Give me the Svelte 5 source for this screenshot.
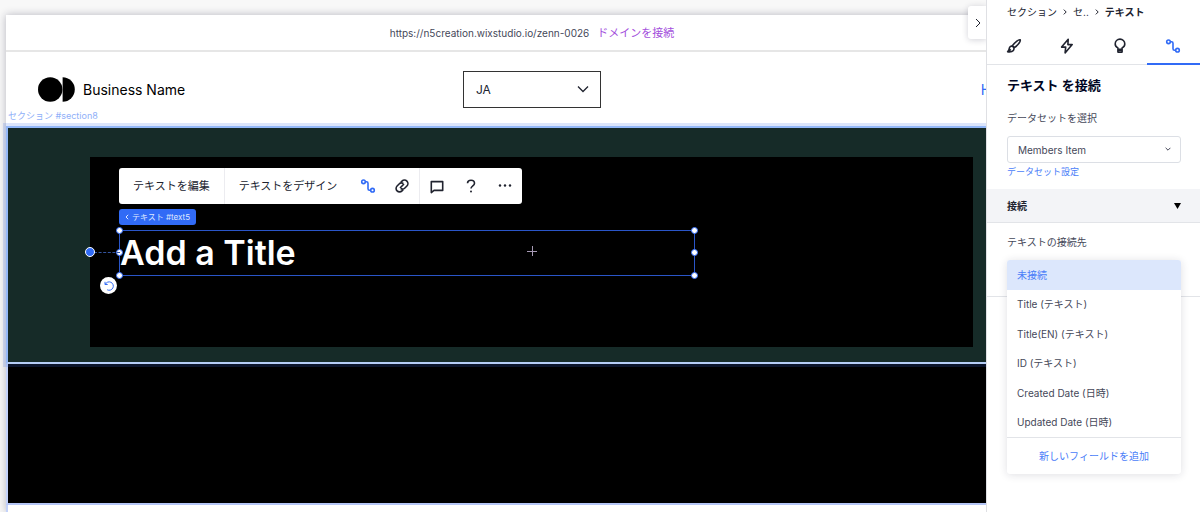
<script lang="ts">
  interface Tab {
    id: string;
    label: string;
  }

  const TABS: Tab[] = [
    { id: 'design', label: 'デザイン' },
    { id: 'actions', label: 'アクション' },
    { id: 'tips', label: 'ヒント' },
    { id: 'connect', label: '接続' },
  ];

  const FIELDS = [
    '未接続',
    'Title (テキスト)',
    'Title(EN) (テキスト)',
    'ID (テキスト)',
    'Created Date (日時)',
    'Updated Date (日時)',
  ];

  const HANDLES = ['nw', 'w', 'sw', 'ne', 'e', 'se'];

  let activeTab = $state('connect');
  let field = $state('未接続');
  let lang = $state('JA');
  let dataset = $state('Members Item');
</script>

{#snippet icon(name: string)}
  <svg class="icon" viewBox="0 0 16 16" width="16" height="16" aria-hidden="true">
    {#if name === 'design'}
      <path d="M14.2 1.8c-1.5-.6-5.6 2.6-7.8 6l1.9 1.9c3.4-2.2 6.6-6.3 5.9-7.9z" />
      <path d="M6.4 8.2c-1.7-.3-2.9.6-3.1 2.2-.1 1.4-.6 2.3-1.7 3.4 2.9.5 6.2-.2 6.4-2.9.1-1.3-.6-2.3-1.6-2.7zM2.2 13.6l2.6-2.3" />
    {:else if name === 'actions'}
      <path d="M9.2 1.2L2.6 9.1h4.1l-.6 5.8 7.1-8.3H8.9z" />
    {:else if name === 'tips'}
      <path d="M5.9 11.2V9.9C4.2 9 3.2 7.8 3.2 5.9a4.8 4.8 0 0 1 9.6 0c0 1.900-1 3.100-2.700 4v1.300zM5.900 11.200v2.900h4.200v-2.900M6 12.200h4" />
    {:else if name === 'connect'}
      <circle cx="3.5" cy="3.8" r="1.8" />
      <circle cx="12.5" cy="12.2" r="1.8" />
      <path d="M5.3 3.8h1.200Q8 3.800 8 5.300v5.400q0 1.500 1.500 1.500h1.200" />
    {:else if name === 'link'}
      <path d="M6.800 4.300l1.200-1.200a3.400 3.400 0 0 1 4.900 4.900l-2 2a3.400 3.400 0 0 1-4.200.5" />
      <path d="M9.200 11.700L8 12.900A3.400 3.400 0 0 1 3.100 8l2-2a3.400 3.400 0 0 1 4.200-.5M6 10l4-4" />
    {:else if name === 'comment'}
      <path d="M2.300 3.600h11.400v8.800H5L2.300 14.600z" />
    {:else if name === 'help'}
      <path d="M4.500 5.200C4.600 3.200 6 2.200 8 2.200s3.500 1.200 3.500 3c0 2.600-3.500 2.600-3.500 5.400" />
      <circle class="solid" cx="8" cy="13.600" r="1" />
    {:else if name === 'more'}
      <circle class="solid" cx="3" cy="7.500" r="1.200" />
      <circle class="solid" cx="8" cy="7.500" r="1.200" />
      <circle class="solid" cx="13" cy="7.500" r="1.200" />
    {/if}
  </svg>
{/snippet}

<div class="editor">
  <main class="stage">
    <div class="page">
      <div class="url-bar">
        <span>https://n5creation.wixstudio.io/zenn-0026</span>
        <a href="#domain">ドメインを接続</a>
      </div>

      <header class="site-header">
        <div class="brand">
          <svg viewBox="0 0 37 25" width="37" height="25" aria-hidden="true">
            <circle cx="12.2" cy="12.5" r="12.2" />
            <path d="M24.600.3a12.200 12.200 0 0 1 0 24.400z" />
          </svg>
          <span>Business Name</span>
        </div>
        <div class="lang">
          <select aria-label="Language" bind:value={lang}>
            <option>JA</option>
            <option>EN</option>
          </select>
          <svg viewBox="0 0 12 12" width="12" height="12" aria-hidden="true"><path d="M1 3.500l5 5 5-5" /></svg>
        </div>
        <nav><a href="#home">Home</a></nav>
      </header>

      <section class="selected-section">
        <span class="section-tag">セクション #section8</span>
        <div class="container">
          <div class="toolbar" role="toolbar" aria-label="テキスト">
            <button>テキストを編集</button>
            <div class="group">
              <button>テキストをデザイン</button>
              <button class="tool on" aria-label="データに接続">{@render icon('connect')}</button>
              <button class="tool" aria-label="リンク">{@render icon('link')}</button>
            </div>
            <div class="group">
              <button class="tool" aria-label="コメント">{@render icon('comment')}</button>
              <button class="tool" aria-label="ヘルプ">{@render icon('help')}</button>
              <button class="tool" aria-label="その他">{@render icon('more')}</button>
            </div>
          </div>
          <button class="element-tag">
            <svg viewBox="0 0 4 6" width="4" height="6" aria-hidden="true"><path d="M3.200.8L1 3l2.200 2.200" /></svg>
            テキスト #text5
          </button>
          <div class="text-box">
            <h1>Add a Title</h1>
            {#each HANDLES as h}<i class="handle {h}"></i>{/each}
            <i class="anchor-line"></i>
            <i class="anchor-dot"></i>
            <button class="rotate" aria-label="リセット">
              <svg viewBox="0 0 12 12" width="12" height="12" aria-hidden="true">
                <path d="M2 1.800v2.700h2.700M2.300 4.300A4.200 4.200 0 1 1 4.200 9.800" />
              </svg>
            </button>
          </div>
          <svg class="center-mark" viewBox="0 0 10 10" width="10" height="10" aria-hidden="true">
            <path d="M0 5.500h10M5.500 0v10" />
          </svg>
        </div>
      </section>

      <section class="dark-section"></section>
      <div class="page-rest"></div>
    </div>
    <button class="collapse" aria-label="パネルを閉じる">
      <svg viewBox="0 0 6 10" width="6" height="10" aria-hidden="true"><path d="M1 1l4 4-4 4" /></svg>
    </button>
  </main>

  <aside class="panel">
    <nav class="crumbs" aria-label="パンくず">
      <a href="#section">セクション</a>
      <svg viewBox="0 0 4 6" width="4" height="6" aria-hidden="true"><path d="M.8.600L3.200 3 .8 5.400" /></svg>
      <a href="#parent">セ..</a>
      <svg viewBox="0 0 4 6" width="4" height="6" aria-hidden="true"><path d="M.8.600L3.200 3 .8 5.400" /></svg>
      <b>テキスト</b>
    </nav>

    <div class="tabs" role="tablist">
      {#each TABS as t (t.id)}
        <button
          role="tab"
          aria-label={t.label}
          aria-selected={activeTab === t.id}
          class:active={activeTab === t.id}
          onclick={() => (activeTab = t.id)}
        >{@render icon(t.id)}</button>
      {/each}
    </div>

    <div class="dataset">
      <h2>テキスト を接続</h2>
      <label for="dataset">データセットを選択</label>
      <div class="picker">
        <select id="dataset" bind:value={dataset}>
          <option>Members Item</option>
        </select>
        <svg viewBox="0 0 6 6" width="6" height="6" aria-hidden="true"><path d="M.6 1.800L3 4.200l2.400-2.400" /></svg>
      </div>
      <a href="#settings">データセット設定</a>
    </div>

    <button class="accordion" aria-expanded="true">
      接続
      <svg viewBox="0 0 7 6" width="7" height="6" aria-hidden="true"><path d="M0 0h7L3.500 6z" /></svg>
    </button>

    <div class="binding">
      <span class="label" id="field-label">テキストの接続先</span>
      <div class="menu-anchor">
        <div class="menu">
          <div class="options" role="listbox" aria-labelledby="field-label">
            {#each FIELDS as f}
              <button
                role="option"
                aria-selected={field === f}
                class:selected={field === f}
                onclick={() => (field = f)}
              >{f}</button>
            {/each}
          </div>
          <button class="add">新しいフィールドを追加</button>
        </div>
      </div>
    </div>
  </aside>
</div>

<style>
  :global(body) {
    background: #fff;
  }
  .editor {
    --blue: #316bf6;
    --link: #4a7df8;
    --ink: #20232f;
    --ink-soft: #454859;
    --rule: #e2e4e8;
    display: grid;
    grid-template-columns: minmax(0, 1fr) 213px;
    min-height: 100vh;
    font-family: Inter, "Noto Sans CJK JP", sans-serif;
    font-size: 10px;
    line-height: 16px;
    color: var(--ink);
  }
  button, select {
    font: inherit;
    color: inherit;
    border: 0;
    margin: 0;
    padding: 0;
    background: none;
    cursor: pointer;
  }
  select { appearance: none; }
  a { text-decoration: none; color: inherit; }
  svg { display: block; fill: none; stroke: currentColor; }
  .icon { stroke-width: 1.6; stroke-linejoin: round; }
  .icon .solid { fill: currentColor; stroke: none; }

  .stage {
    position: relative;
    display: flex;
    overflow: hidden;
    padding: 15px 0 0 6px;
    background: #f8f8f8;
  }
  /* the page runs on under the side panel */
  .page {
    flex: none;
    display: flex;
    flex-direction: column;
    width: calc(100% + 71px);
    background: #fff;
    box-shadow: 0 0 8px rgba(30, 30, 60, 0.3);
  }
  .url-bar {
    display: flex;
    justify-content: center;
    align-items: center;
    gap: 8px;
    height: 35px;
    border-bottom: 2px solid #e6e6e6;
    color: var(--ink-soft);
  }
  .url-bar a { font-size: 11px; color: #a34fdc; }

  .site-header {
    display: grid;
    grid-template-columns: 1fr auto 1fr;
    align-items: center;
    box-sizing: border-box;
    height: 74px;
    padding-top: 1px;
    font-size: 14px;
  }
  .brand {
    display: flex;
    align-items: center;
    gap: 8px;
    padding-left: 32px;
    color: #000;
  }
  .brand svg { fill: #000; stroke: none; }
  .lang { position: relative; }
  .lang select {
    display: block;
    width: 138px;
    height: 37px;
    padding: 0 12px;
    border: 1px solid #333;
    border-radius: 0;
    font-size: 12px;
  }
  .lang svg {
    position: absolute;
    right: 12px;
    top: 12px;
    pointer-events: none;
    stroke-width: 1.3;
  }
  .site-header nav {
    justify-self: end;
    padding-right: 38px;
    color: var(--blue);
  }

  .selected-section {
    position: relative;
    z-index: 1;
    padding: 29px 83px 15px 82px;
    border: 2px solid #94b8f8;
    border-bottom-color: #b5cdf6;
    background: #162b28;
    box-shadow: 0 0 0 3px rgba(60, 110, 235, 0.18);
  }
  .section-tag {
    position: absolute;
    left: 0;
    bottom: 100%;
    margin-bottom: 4px;
    font-size: 9px;
    color: #8fb0f9;
  }
  .container {
    position: relative;
    min-height: 168px;
    padding: 11px 29px;
    background: #000;
  }
  .toolbar {
    display: flex;
    width: max-content;
    height: 36px;
    border-radius: 3px;
    background: #fff;
    font-size: 11px;
  }
  .toolbar button { padding: 0 14px; }
  .toolbar .tool {
    display: grid;
    place-items: center;
    width: 34px;
    padding: 0;
  }
  .toolbar .on { color: var(--blue); }
  .group {
    display: flex;
    border-left: 1px solid #ececf0;
  }
  .element-tag {
    display: flex;
    align-items: center;
    gap: 3px;
    margin-top: 5px;
    padding: 0 6px;
    border-radius: 3px;
    background: var(--blue);
    color: #dfe8ff;
    font-size: 8px;
  }
  .text-box {
    position: relative;
    box-sizing: border-box;
    width: calc(70% - 2px);
    margin-top: 5px;
    border: 1px solid #2a55c8;
  }
  h1 {
    margin: 0;
    font-size: 34px;
    line-height: 44px;
    font-weight: 600;
    color: #fff;
  }
  .handle {
    position: absolute;
    box-sizing: border-box;
    width: 7px;
    height: 7px;
    border: 1px solid var(--blue);
    border-radius: 50%;
    background: #fff;
  }
  .nw, .w, .sw { left: -4px; }
  .ne, .e, .se { right: -4px; }
  .nw, .ne { top: -4px; }
  .sw, .se { bottom: -4px; }
  .w, .e { top: calc(50% - 4px); }
  .anchor-line {
    position: absolute;
    top: calc(50% - 1px);
    right: 100%;
    width: 26px;
    border-top: 1px dashed #34549f;
  }
  .anchor-dot {
    position: absolute;
    box-sizing: border-box;
    top: calc(50% - 6px);
    left: -35px;
    width: 10px;
    height: 10px;
    border: 1px solid #fff;
    border-radius: 50%;
    background: var(--blue);
  }
  .rotate {
    position: absolute;
    display: grid;
    place-items: center;
    left: -20px;
    top: 46px;
    width: 17px;
    height: 17px;
    border-radius: 50%;
    background: #fff;
    color: var(--blue);
  }
  .center-mark {
    position: absolute;
    left: calc(50% - 5px);
    top: calc(50% - 6px);
    stroke: #a79ab5;
  }

  .dark-section {
    min-height: 139px;
    border-left: 2px solid #c3d2fa;
    border-bottom: 2px solid #b5c6f6;
    background: #000;
  }
  .page-rest {
    flex: 1;
    border-left: 2px solid #c3d2fa;
  }
  .collapse {
    position: absolute;
    z-index: 2;
    display: grid;
    place-items: center;
    top: 6px;
    right: 0;
    width: 19px;
    height: 33px;
    border-radius: 3px 0 0 3px;
    background: #fff;
    box-shadow: 0 1px 6px rgba(30, 30, 60, 0.2);
  }

  .panel {
    position: relative;
    z-index: 3;
    background: #fff;
    box-shadow: 0 0 0 1px #dfe0e4;
  }
  .crumbs {
    display: flex;
    align-items: center;
    gap: 6px;
    height: 24px;
    padding-left: 20px;
  }
  .tabs {
    display: grid;
    grid-template-columns: repeat(4, 1fr);
    height: 40px;
    border-bottom: 1px solid var(--rule);
  }
  .tabs button {
    display: grid;
    place-items: center;
    padding-top: 4px;
    margin-bottom: -1px;
    border-bottom: 2px solid transparent;
  }
  .tabs .active {
    color: var(--blue);
    border-bottom-color: var(--blue);
  }
  .dataset {
    display: flex;
    flex-direction: column;
    padding: 10px 19px 9px 20px;
  }
  h2 {
    margin: 0 0 15px;
    font-size: 13px;
    line-height: 20px;
    font-weight: 700;
    color: #000624;
  }
  label, .label {
    display: block;
    margin-bottom: 10px;
    color: var(--ink-soft);
  }
  .picker { position: relative; }
  .picker select {
    display: block;
    box-sizing: border-box;
    width: 100%;
    height: 27px;
    padding: 0 10px;
    border: 1px solid #dcdfe5;
    border-radius: 3px;
    color: var(--ink-soft);
  }
  .picker svg {
    position: absolute;
    right: 10px;
    top: 10px;
    pointer-events: none;
    color: var(--ink-soft);
  }
  .dataset a {
    align-self: flex-start;
    margin-top: 1px;
    font-size: 9px;
    color: var(--link);
  }
  .accordion {
    display: flex;
    align-items: center;
    justify-content: space-between;
    width: 100%;
    height: 34px;
    padding: 0 19px 0 20px;
    border-bottom: 1px solid var(--rule);
    background: #f3f4f7;
    font-weight: 700;
  }
  .accordion svg { fill: #000; stroke: none; }
  .binding {
    padding: 11px 19px 9px 20px;
    border-bottom: 1px solid var(--rule);
  }
  .menu-anchor {
    position: relative;
    height: 27px;
  }
  .menu {
    position: absolute;
    inset: 0 0 auto;
    overflow: hidden;
    border-radius: 3px;
    background: #fff;
    box-shadow: 0 1px 8px rgba(30, 30, 60, 0.14);
  }
  .options {
    display: grid;
    grid-auto-rows: 1fr;
    min-height: 177px;
    color: var(--ink-soft);
  }
  .options button {
    padding: 0 10px;
    text-align: left;
  }
  .options .selected {
    background: #dce7fc;
    color: var(--link);
  }
  .add {
    display: block;
    width: 100%;
    height: 37px;
    border-top: 1px solid var(--rule);
    color: var(--link);
  }
</style>
